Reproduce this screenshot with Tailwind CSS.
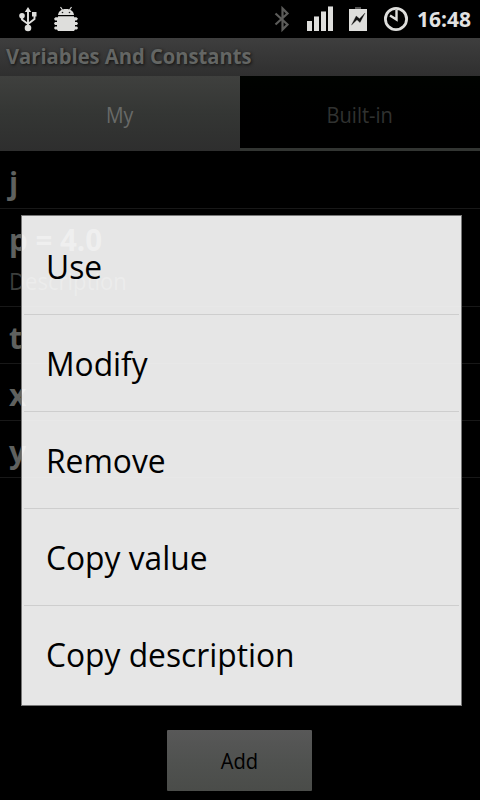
<!DOCTYPE html>
<html lang="en">
<head>
<meta charset="utf-8">
<title>Variables And Constants</title>
<script src="https://cdn.jsdelivr.net/npm/@tailwindcss/browser@4"></script>
</head>
<body class="bg-black">
<div class="relative flex h-[800px] w-[480px] flex-col overflow-hidden bg-black font-['Open_Sans','Noto_Sans',sans-serif]">
  <header class="flex h-[38px] shrink-0 items-center bg-black pr-[10px] pl-[18px]">
    <svg class="h-[38px] w-[20px]" viewBox="18 0 20 38" fill="#dededc" stroke="#dededc">
      <path d="M28 27V10M22 16v3.500l6 4.500M34.500 15v4l-6.500 5" fill="none" stroke-width="1.900"/>
      <path d="M28 7l-3.200 5h6.400zM32 12h4.500v4.500H32z" stroke="none"/><circle cx="22" cy="15.800" r="2.800" stroke="none"/><circle cx="28" cy="28" r="3.300" stroke="none"/>
    </svg>
    <svg class="ml-[15px] h-[38px] w-[26px]" viewBox="53 0 26 38" fill="#dededc">
      <path d="M58 15c.5-3.500 3-6 8-6s7.500 2.500 8 6z"/>
      <path d="M60.500 7l2 3M71.500 7l-2 3" stroke="#dededc" stroke-width="1.200"/>
      <path d="M58 16.300h16v1h2.500l1.500 1.500-1.500 1.700H75v1.600h2l1 1.400-1 1.500h-2v1.500h2l1 1.500-1 1.500h-2l-1 1.500H58l-1-1.500h-2l-1-1.500 1-1.500h2V25h-2l-1-1.500 1-1.400h2v-1.600h-2l-1-1.700 1.500-1.500H58z"/>
      <circle cx="62.500" cy="12.500" r=".8" fill="#222"/><circle cx="69.500" cy="12.500" r=".8" fill="#222"/>
    </svg>
    <div class="grow"></div>
    <svg class="h-[38px] w-[18px]" viewBox="274 0 18 38" fill="none" stroke="#5c5c5a" stroke-width="2.200"><path d="M275.500 13.500l12 11-5 5V8.500l5 5-12 11"/></svg>
    <svg class="ml-[14px] h-[38px] w-[28px]" viewBox="306 0 28 38" fill="#dededc"><path d="M307 21h5v10h-5zM314 16h5v15h-5zM321 11.500h5V31h-5zM328 7h5v24h-5z"/><path d="M314 16h5v1h-5zM321 11h5v1h-5zM328 6h5v1h-5z" fill="#777"/></svg>
    <svg class="ml-[14px] h-[38px] w-[20px]" viewBox="348 0 20 38"><path d="M349 9h18v22h-18z" fill="#dededc"/><path d="M355 7h6v2h-6z" fill="#555"/><path d="M365 13l-5 9.500-3-2.700-5.500 5.200 4.700-9 3.300 2.800z" fill="#111" stroke="#111" stroke-width=".3"/></svg>
    <svg class="ml-[15px] h-[38px] w-[26px]" viewBox="383 0 26 38" fill="none" stroke="#dededc"><circle cx="396" cy="19" r="10.600" stroke-width="2.800"/><path d="M396.500 10v9.500l-6.500-4" stroke-width="2.400"/></svg>
    <div class="ml-[8px] w-[53px] text-[21px] leading-[38px] font-bold whitespace-nowrap text-[#e2e2e2]"><span class="inline-block origin-left">16:48</span></div>
  </header>
  <h1 class="h-[38px] shrink-0 bg-linear-to-b from-[#3e3e3e] to-[#2f2f2f] pl-[6px] text-[21px] leading-[37px] font-bold whitespace-nowrap text-[#646664] [text-shadow:1px_1px_3px_#111]"><span class="inline-block origin-left scale-x-[.96]">Variables And Constants</span></h1>
  <nav class="flex h-[75px] shrink-0 text-[21px] leading-[78px]">
    <div class="w-[240px] bg-linear-to-b from-[#3f403e] via-[#343634] to-[#2e2e2e] text-center text-[#686a68]"><span class="inline-block scale-x-[.93]">My</span></div>
    <div class="w-[240px] border-b-3 border-[#323532] bg-linear-to-b from-[#000300] to-black text-center text-[#303230]"><span class="inline-block scale-x-[.955]">Built-in</span></div>
  </nav>
  <ul class="mt-px text-[30px] leading-[61px] font-bold whitespace-nowrap text-[#5f615f]">
    <li class="h-[57px] border-b border-[#181818] pl-[9px]">j</li>
    <li class="h-[98px] border-b border-[#181818] pl-[9px]"><div class="h-[56px]"><span class="inline-block origin-left scale-x-[.985]">p = 4.0</span></div><div class="text-[23px] leading-[33px] font-normal text-[#3c3e3c]"><span class="inline-block origin-left scale-x-[.96]">Description</span></div></li>
    <li class="h-[57px] border-b border-[#181818] pl-[9px]">t</li>
    <li class="h-[57px] border-b border-[#181818] pl-[9px]">x</li>
    <li class="h-[57px] border-b border-[#181818] pl-[9px]">y</li>
  </ul>
  <div class="mt-auto mb-[9px] ml-[167px] h-[61px] w-[145px] rounded-[1px] bg-linear-to-b from-[#585858] via-[#505250] to-[#4a4c49] text-center text-[21px] leading-[63px] text-black"><span class="inline-block scale-x-[.96]">Add</span></div>
  <div class="absolute top-[215px] left-[21px] h-[491px] w-[441px] border border-[#777] bg-white/90 px-[2px] text-[33px] leading-[97px] whitespace-nowrap text-black">
    <div class="h-[99px] border-b border-[#cecece] pt-[2px] pl-[21.500px]"><span class="inline-block origin-left scale-x-[.962]">Use</span></div>
    <div class="h-[97px] border-b border-[#cecece] pl-[21.500px]"><span class="inline-block origin-left scale-x-[.962]">Modify</span></div>
    <div class="h-[97px] border-b border-[#cecece] pl-[21.500px]"><span class="inline-block origin-left scale-x-[.962]">Remove</span></div>
    <div class="h-[97px] border-b border-[#cecece] pl-[21.500px]"><span class="inline-block origin-left scale-x-[.962]">Copy value</span></div>
    <div class="h-[97px] pl-[21.500px]"><span class="inline-block origin-left scale-x-[.962]">Copy description</span></div>
  </div>
</div>
</body>
</html>
